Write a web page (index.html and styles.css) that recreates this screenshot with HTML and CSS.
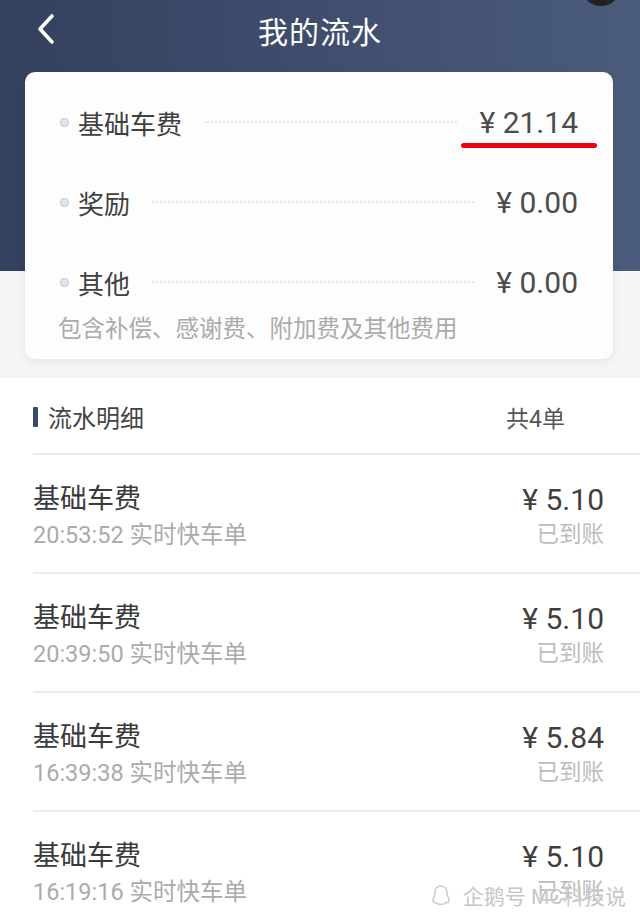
FILE: index.html
```html
<!DOCTYPE html>
<html lang="zh-CN">
<head>
  <meta charset="UTF-8" />
  <meta name="viewport" content="width=device-width, initial-scale=1.0"/>
  <title>我的流水</title>
  <link rel="stylesheet" href="styles.css">
</head>
<body>
  <div class="top">
    <div class="navbar">
      <svg class="back" width="24" height="34" viewBox="0 0 24 34">
        <polyline points="17,4 5,17 17,30" fill="none" stroke="#fff" stroke-width="3.6" stroke-linecap="round" stroke-linejoin="round"/>
      </svg>
      <h1>我的流水</h1>
      <div class="cam"></div>
    </div>

    <div class="summary">
      <div class="sum-row">
        <span class="bullet"></span>
        <span class="label">基础车费</span>
        <span class="leader"></span>
        <span class="amount marked">¥ 21.14</span>
      </div>
      <div class="sum-row">
        <span class="bullet"></span>
        <span class="label">奖励</span>
        <span class="leader"></span>
        <span class="amount">¥ 0.00</span>
      </div>
      <div class="sum-row">
        <span class="bullet"></span>
        <span class="label">其他</span>
        <span class="leader"></span>
        <span class="amount">¥ 0.00</span>
      </div>
      <div class="note">包含补偿、感谢费、附加费及其他费用</div>
    </div>
  </div>

  <div class="list">
    <div class="list-head">
      <div class="list-title"><span class="bar"></span>流水明细</div>
      <div class="count">共4单</div>
    </div>

    <div class="item">
      <div class="item-left">
        <div class="item-title">基础车费</div>
        <div class="item-sub">20:53:52 实时快车单</div>
      </div>
      <div class="item-right">
        <div class="item-amount">¥ 5.10</div>
        <div class="item-status">已到账</div>
      </div>
    </div>

    <div class="item">
      <div class="item-left">
        <div class="item-title">基础车费</div>
        <div class="item-sub">20:39:50 实时快车单</div>
      </div>
      <div class="item-right">
        <div class="item-amount">¥ 5.10</div>
        <div class="item-status">已到账</div>
      </div>
    </div>

    <div class="item">
      <div class="item-left">
        <div class="item-title">基础车费</div>
        <div class="item-sub">16:39:38 实时快车单</div>
      </div>
      <div class="item-right">
        <div class="item-amount">¥ 5.84</div>
        <div class="item-status">已到账</div>
      </div>
    </div>

    <div class="item">
      <div class="item-left">
        <div class="item-title">基础车费</div>
        <div class="item-sub">16:19:16 实时快车单</div>
      </div>
      <div class="item-right">
        <div class="item-amount">¥ 5.10</div>
        <div class="item-status">已到账</div>
      </div>
    </div>
  </div>

  <div class="watermark">
    <svg width="20" height="22" viewBox="0 0 20 22">
      <path d="M10 2 C5.5 2 4 5.5 4 9 C4 11 2.5 13 2 16 C1.8 18 3 19 4.5 18.5 C6 20 8 20.5 10 20.5 C12 20.5 14 20 15.5 18.5 C17 19 18.2 18 18 16 C17.5 13 16 11 16 9 C16 5.5 14.5 2 10 2 Z" fill="none" stroke="#cfcfcf" stroke-width="1.6"/>
    </svg>
    <span>企鹅号 MC科技说</span>
  </div>
</body>
</html>
```

FILE: styles.css
```css
body {
  margin: 0;
  padding: 0;
  width: 640px;
  height: 924px;
  overflow: hidden;
  position: relative;
  font-family: Roboto, "Noto Sans CJK SC", sans-serif;
  background-color: #ffffff;
  color: #444;
}

.top {
  background: linear-gradient(to bottom, transparent 271px, #f5f5f7 271px),
              linear-gradient(to right, #33415e, #4b5b7c);
  padding-bottom: 19px;
}

.navbar {
  height: 60px;
  display: flex;
  align-items: center;
  justify-content: center;
  position: relative;
}

.navbar h1 {
  margin: 0;
  font-size: 30px;
  font-weight: 400;
  color: #fff;
  letter-spacing: 1px;
}

.back {
  position: absolute;
  left: 35px;
  top: 12px;
}

.cam {
  position: absolute;
  right: 20px;
  top: -30px;
  width: 38px;
  height: 36px;
  border-radius: 50%;
  background-color: #222;
}

.summary {
  margin: 12px 27px 0 25px;
  background-color: #fdfdfe;
  border-radius: 10px;
  box-shadow: 0 3px 8px rgba(0, 0, 0, 0.06);
  padding: 30px 35px 15px 35px;
}

.sum-row {
  display: flex;
  align-items: center;
  height: 40px;
  margin-bottom: 40px;
}

.sum-row:nth-child(3) {
  margin-bottom: 12px;
}

.bullet {
  width: 7px;
  height: 7px;
  border-radius: 50%;
  border: 1px solid #b9c3d4;
  background-color: #dfe5ee;
  margin-right: 9px;
  flex-shrink: 0;
}

.label {
  font-size: 26px;
  color: #404040;
}

.leader {
  flex: 1;
  border-top: 2px dotted #e8e8e8;
  margin: 0 22px;
}

.amount {
  font-size: 30px;
  color: #4c4c4c;
  position: relative;
}

.amount.marked::after {
  content: "";
  position: absolute;
  left: -18px;
  right: -19px;
  bottom: -8px;
  height: 5px;
  border-radius: 3px;
  background-color: #f2000c;
}

.note {
  font-size: 23.5px;
  color: #ababab;
  line-height: 30px;
  margin-left: -2px;
}

.list {
  padding-left: 33px;
}

.list-head {
  height: 73px;
  display: flex;
  align-items: center;
  justify-content: space-between;
  padding-right: 75px;
  border-bottom: 2px solid #ececec;
  padding-top: 2px;
}

.list-title {
  font-size: 24px;
  color: #444;
  display: flex;
  align-items: center;
}

.bar {
  width: 5px;
  height: 20px;
  background-color: #3b4a67;
  border-radius: 1px;
  margin-right: 10px;
}

.count {
  font-size: 23px;
  color: #555;
}

.item {
  border-bottom: 2px solid #ececec;
  display: flex;
  justify-content: space-between;
  align-items: flex-start;
  padding-right: 36px;
  box-sizing: border-box;
  height: 119px;
  padding-top: 27px;
}

.item-title {
  font-size: 27px;
  color: #3a3a3a;
  line-height: 34px;
}

.item-sub {
  font-size: 23.5px;
  color: #ababab;
  line-height: 30px;
  margin-top: 4px;
}

.item-right {
  text-align: right;
}

.item-amount {
  font-size: 30px;
  color: #3f3f3f;
  line-height: 36px;
}

.item-status {
  font-size: 22.5px;
  color: #bcbcbc;
  line-height: 30px;
  margin-top: 1px;
}

.watermark {
  position: absolute;
  right: 14px;
  bottom: 14px;
  display: flex;
  align-items: center;
  gap: 12px;
  font-size: 21px;
  color: rgba(190, 190, 190, 0.9);
  text-shadow: 0 0 2px rgba(255, 255, 255, 0.9);
}
```
